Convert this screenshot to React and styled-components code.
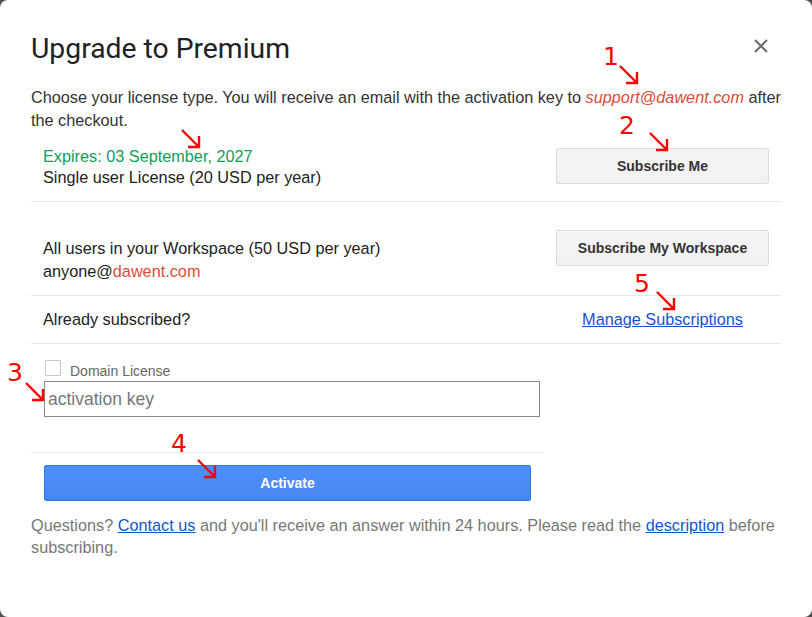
import React from 'react'
import styled, { createGlobalStyle } from 'styled-components'

const Global = createGlobalStyle`
    html, body {
        margin: 0;
        padding: 0;
        background: #4f4f4f;
    }
    body {
        font-family: "Liberation Sans", Arial, sans-serif;
    }
`;

const Dialog = styled.div`
    position: relative;
    box-sizing: border-box;
    width: 812px;
    height: 617px;
    background: #fff;
    border-radius: 8px;
    padding: 28px 31px 0 31px;
    overflow: hidden;
`;

const Header = styled.div`
    display: flex;
    justify-content: space-between;
    align-items: center;
    height: 40px;
`;

const Title = styled.h1`
    margin: 0;
    margin-top: 1px;
    font-family: Roboto, "Open Sans", sans-serif;
    font-size: 28.3px;
    font-weight: 400;
    color: #202124;
`;

const Close = styled.button`
    width: 24px;
    height: 24px;
    margin-right: 8px;
    margin-top: -4px;
    padding: 0;
    border: none;
    background: none;
    display: flex;
    align-items: center;
    justify-content: center;
    cursor: pointer;
`;

const Intro = styled.p`
    margin: 18px 0 0 0;
    font-size: 16.25px;
    line-height: 23px;
    color: #333;
`;

const Email = styled.span`
    color: #dd4b39;
    font-style: ${p => p.$italic ? 'italic' : 'normal'};
`;

const Row = styled.div`
    box-sizing: border-box;
    height: ${p => p.$h}px;
    display: flex;
    align-items: center;
    justify-content: space-between;
    padding: 0 12px;
    border-bottom: 1px solid #e6e6e6;
`;

const Info = styled.div`
    font-size: 16.25px;
    line-height: ${p => p.$lh || 21}px;
    color: #222;
    padding-top: ${p => p.$shift || 0}px;
`;

const Expires = styled.div`
    color: #0f9d58;
`;

const Side = styled.div`
    width: 213px;
    display: flex;
    justify-content: center;
`;

const GrayButton = styled.button`
    box-sizing: border-box;
    width: 213px;
    height: 36px;
    margin-top: -1px;
    border: 1px solid #dcdcdc;
    border-radius: 2px;
    background: linear-gradient(#f5f5f5, #f1f1f1);
    font-family: "Liberation Sans", Arial, sans-serif;
    font-size: 14px;
    font-weight: 700;
    color: #333;
    cursor: pointer;
`;

const Link = styled.a`
    color: #1155cc;
    text-decoration: underline;
    cursor: pointer;
`;

const FormBox = styled.div`
    box-sizing: border-box;
    width: 513px;
    padding: 16px 0 35px 13px;
    border-bottom: 1px solid #e6e6e6;
`;

const CheckRow = styled.label`
    display: flex;
    align-items: flex-end;
    gap: 9px;
    height: 19px;
    margin-left: 1px;
    font-size: 14px;
    line-height: 16px;
    color: #666;
`;

const Box = styled.span`
    box-sizing: border-box;
    width: 16px;
    height: 16px;
    border: 1px solid #c6c6c6;
    border-radius: 1px;
    background: #fff;
    margin-bottom: 3px;
`;

const KeyInput = styled.input`
    box-sizing: border-box;
    display: block;
    width: 496px;
    height: 36px;
    margin-top: 2px;
    padding: 0 3px;
    border: 1px solid #8a8a8a;
    border-radius: 0;
    font-family: "Liberation Sans", Arial, sans-serif;
    font-size: 17.5px;
    color: #333;
    outline: none;
    &::placeholder {
        color: #777;
    }
`;

const ActivateWrap = styled.div`
    padding: 12px 0 0 13px;
`;

const BlueButton = styled.button`
    box-sizing: border-box;
    width: 487px;
    height: 36px;
    border: 1px solid #3079ed;
    border-radius: 2px;
    background: linear-gradient(#4d90fe, #4787ed);
    font-family: "Liberation Sans", Arial, sans-serif;
    font-size: 14px;
    font-weight: 700;
    color: #fff;
    cursor: pointer;
`;

const Footer = styled.p`
    margin: 13px 0 0 0;
    font-size: 16.25px;
    line-height: 22px;
    color: #777;
`;

const Mark = styled.div`
    position: absolute;
    left: ${p => p.$x}px;
    top: ${p => p.$y}px;
    font-family: "DejaVu Sans", sans-serif;
    font-size: 25px;
    line-height: 25px;
    color: #ff0000;
    pointer-events: none;
`;

const Arrow = ({ x, y }) => (
    <svg style={{ position: 'absolute', left: x, top: y }} width="22" height="22" viewBox="0 0 22 22">
        <path d="M2 2 L19 19 M19 8 V19 H8" fill="none" stroke="#ff0000" strokeWidth="2.4" />
    </svg>
);

export default function App() {
    return (
        <>
            <Global />
            <Dialog>
                <Header>
                    <Title>Upgrade to Premium</Title>
                    <Close aria-label="close">
                        <svg width="14" height="14" viewBox="0 0 14 14">
                            <path d="M1 1 L13 13 M13 1 L1 13" stroke="#6b6b6b" strokeWidth="2" />
                        </svg>
                    </Close>
                </Header>
                <Intro>
                    Choose your license type. You will receive an email with the activation key to <Email $italic>support@dawent.com</Email> after the checkout.
                </Intro>

                <Row $h={70}>
                    <Info>
                        <Expires>Expires: 03 September, 2027</Expires>
                        <div>Single user License (20 USD per year)</div>
                    </Info>
                    <Side><GrayButton>Subscribe Me</GrayButton></Side>
                </Row>
                <Row $h={94}>
                    <Info $lh={23} $shift={22}>
                        <div>All users in your Workspace (50 USD per year)</div>
                        <div>anyone@<Email>dawent.com</Email></div>
                    </Info>
                    <Side><GrayButton>Subscribe My Workspace</GrayButton></Side>
                </Row>
                <Row $h={48}>
                    <Info>Already subscribed?</Info>
                    <Side><Info><Link>Manage Subscriptions</Link></Info></Side>
                </Row>

                <FormBox>
                    <CheckRow>
                        <Box />
                        Domain License
                    </CheckRow>
                    <KeyInput placeholder="activation key" />
                </FormBox>
                <ActivateWrap>
                    <BlueButton>Activate</BlueButton>
                </ActivateWrap>

                <Footer>
                    Questions? <Link>Contact us</Link> and you'll receive an answer within 24 hours. Please read the <Link>description</Link> before subscribing.
                </Footer>

                <Mark $x={603} $y={44}>1</Mark>
                <Arrow x={618} y={64} />
                <Mark $x={619} $y={113}>2</Mark>
                <Arrow x={648} y={131} />
                <Arrow x={180} y={128} />
                <Mark $x={7} $y={360}>3</Mark>
                <Arrow x={24} y={381} />
                <Mark $x={171} $y={431}>4</Mark>
                <Arrow x={196} y={458} />
                <Mark $x={634} $y={271}>5</Mark>
                <Arrow x={655} y={290} />
            </Dialog>
        </>
    )
}
